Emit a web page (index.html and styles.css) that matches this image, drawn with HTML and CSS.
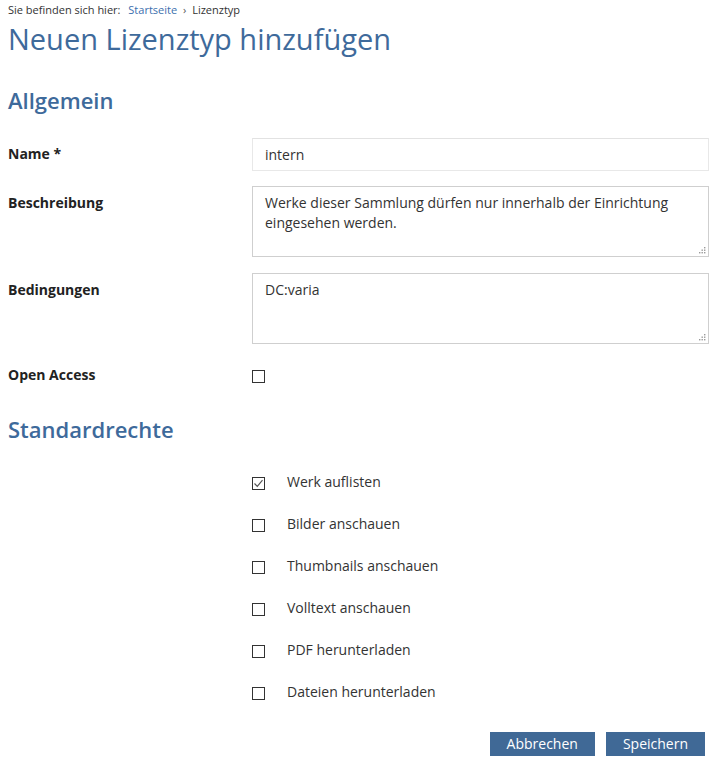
FILE: index.html
```html
<!DOCTYPE html>
<html lang="de">
<head>
<meta charset="utf-8">
<title>Neuen Lizenztyp hinzufügen</title>
<link rel="stylesheet" href="styles.css">
</head>
<body>
<main class="page">
  <nav class="breadcrumb">Sie befinden sich hier: <a href="#">Startseite</a> <span class="sep">›</span> Lizenztyp</nav>
  <h1 class="title">Neuen Lizenztyp hinzufügen</h1>

  <form class="form">
    <h2 class="section">Allgemein</h2>

    <div class="row">
      <label class="label" for="name">Name *</label>
      <input class="input" id="name" type="text" value="intern">
    </div>

    <div class="row">
      <label class="label label-ta" for="desc">Beschreibung</label>
      <div class="ta-wrap">
        <textarea class="textarea" id="desc">Werke dieser Sammlung dürfen nur innerhalb der Einrichtung eingesehen werden.</textarea>
        <svg class="grip" width="7" height="7" viewBox="0 0 7 7"><rect x="5" y="0" width="1.4" height="1.4"/><rect x="2.5" y="2.5" width="1.4" height="1.4"/><rect x="5" y="2.5" width="1.4" height="1.4"/><rect x="0" y="5" width="1.4" height="1.4"/><rect x="2.5" y="5" width="1.4" height="1.4"/><rect x="5" y="5" width="1.4" height="1.4"/></svg>
      </div>
    </div>

    <div class="row row-ta2">
      <label class="label label-ta" for="cond">Bedingungen</label>
      <div class="ta-wrap">
        <textarea class="textarea" id="cond">DC:varia</textarea>
        <svg class="grip" width="7" height="7" viewBox="0 0 7 7"><rect x="5" y="0" width="1.4" height="1.4"/><rect x="2.5" y="2.5" width="1.4" height="1.4"/><rect x="5" y="2.5" width="1.4" height="1.4"/><rect x="0" y="5" width="1.4" height="1.4"/><rect x="2.5" y="5" width="1.4" height="1.4"/><rect x="5" y="5" width="1.4" height="1.4"/></svg>
      </div>
    </div>

    <div class="row row-check">
      <span class="label label-oa">Open Access</span>
      <div class="check-cell"><span class="box"></span></div>
    </div>

    <h2 class="section section-2">Standardrechte</h2>

    <ul class="rights">
      <li class="right"><span class="box"><svg width="11" height="11" viewBox="0 0 11 11"><polyline points="1.5,5.5 4.3,8.3 9.5,2.2" fill="none" stroke="#555" stroke-width="1.2"/></svg></span><span class="right-label">Werk auflisten</span></li>
      <li class="right"><span class="box"></span><span class="right-label">Bilder anschauen</span></li>
      <li class="right"><span class="box"></span><span class="right-label">Thumbnails anschauen</span></li>
      <li class="right"><span class="box"></span><span class="right-label">Volltext anschauen</span></li>
      <li class="right"><span class="box"></span><span class="right-label">PDF herunterladen</span></li>
      <li class="right"><span class="box"></span><span class="right-label">Dateien herunterladen</span></li>
    </ul>

    <div class="actions">
      <button type="button" class="btn">Abbrechen</button>
      <button type="button" class="btn">Speichern</button>
    </div>
  </form>
</main>
</body>
</html>
```

FILE: styles.css
```css
* { box-sizing: border-box; }

html, body {
  margin: 0;
  padding: 0;
  background: #fff;
}

body {
  font-family: "Open Sans", "Liberation Sans", sans-serif;
  font-size: 14px;
  color: #333;
}

.page {
  width: 709px;
  padding: 2px 0 0 8px;
}

.breadcrumb {
  font-size: 11px;
  line-height: 16px;
  color: #333;
}

.breadcrumb a {
  color: #3c6fae;
  text-decoration: none;
  margin-left: 5px;
}

.breadcrumb .sep {
  margin: 0 3px;
  color: #555;
}

.title {
  margin: 2px 0 0;
  font-size: 29px;
  font-weight: 400;
  line-height: 38px;
  color: #3e6a9b;
}

.form {
  margin: 0;
}

.section {
  margin: 27px 0 0;
  font-size: 22px;
  font-weight: 600;
  line-height: 30px;
  color: #3e6a9b;
}

.section-2 {
  margin-top: 23px;
}

.row {
  display: grid;
  grid-template-columns: 244px 457px;
  margin-top: 15px;
}

.row-ta2 {
  margin-top: 16px;
}

.section + .row {
  margin-top: 23px;
}

.label {
  font-weight: 700;
  font-size: 14px;
  line-height: 20px;
  padding-top: 6px;
  color: #222;
}

.label-ta {
  padding-top: 7px;
}

.label-oa {
  padding-top: 7px;
}

.input {
  display: block;
  width: 100%;
  height: 33px;
  margin: 0;
  padding: 0 12px;
  border: 1px solid #e8e8e8;
  border-top-color: #e2e2e2;
  font-family: inherit;
  font-size: 14px;
  color: #333;
  outline: none;
}

.ta-wrap {
  position: relative;
  height: 71px;
}

.textarea {
  display: block;
  width: 100%;
  height: 71px;
  margin: 0;
  padding: 6px 12px;
  border: 1px solid #cfcfcf;
  font-family: inherit;
  font-size: 14px;
  line-height: 20px;
  color: #333;
  resize: none;
  outline: none;
  overflow: hidden;
}

.grip {
  position: absolute;
  right: 3px;
  bottom: 3px;
  fill: #9a9a9a;
}

.row-check {
  height: 33px;
  margin-top: 14px;
}

.check-cell {
  display: flex;
  padding-top: 12px;
}

.box {
  display: inline-flex;
  align-items: center;
  justify-content: center;
  width: 13px;
  height: 13px;
  border: 1.3px solid #333;
  background: #fff;
  flex: none;
}

.rights {
  list-style: none;
  margin: 18px 0 0;
  padding: 0 0 0 244px;
}

.right {
  display: flex;
  align-items: center;
  height: 42px;
}

.right-label {
  margin-left: 22px;
  line-height: 20px;
  margin-top: -2px;
}

.actions {
  display: flex;
  justify-content: flex-end;
  gap: 11px;
  width: 697px;
  margin-top: 18px;
}

.btn {
  height: 24px;
  padding: 0 17px;
  border: 0;
  background: #406996;
  color: #fff;
  font-family: inherit;
  font-size: 14px;
  line-height: 24px;
  cursor: pointer;
}
```
